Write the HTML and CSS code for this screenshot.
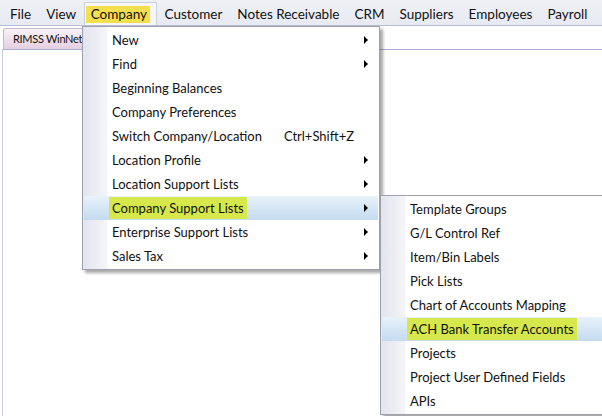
FILE: index.html
```html
<!DOCTYPE html>
<html lang="en">
<head>
    <meta charset="UTF-8">
    <meta name="viewport" content="width=device-width, initial-scale=1.0">
    <title>RIMSS WinNet</title>
    <link rel="stylesheet" href="styles.css">
</head>
<body>

<div class="menubar">
    <span class="bar-item">File</span>
    <span class="bar-item">View</span>
    <span class="bar-item open"><span class="hl">Company</span></span>
    <span class="bar-item">Customer</span>
    <span class="bar-item">Notes Receivable</span>
    <span class="bar-item">CRM</span>
    <span class="bar-item">Suppliers</span>
    <span class="bar-item">Employees</span>
    <span class="bar-item">Payroll</span>
</div>

<div class="workspace">
    <div class="tabs">
        <div class="tab">RIMSS WinNet</div>
    </div>
    <div class="panel"></div>
</div>

<!-- Company dropdown -->
<div class="menu menu-company">
    <div class="menu-item"><span class="label">New</span><span class="arrow"></span></div>
    <div class="menu-item"><span class="label">Find</span><span class="arrow"></span></div>
    <div class="menu-item"><span class="label">Beginning Balances</span><span class="cell"></span></div>
    <div class="menu-item"><span class="label">Company Preferences</span><span class="cell"></span></div>
    <div class="menu-item"><span class="label">Switch Company/Location</span><span class="shortcut">Ctrl+Shift+Z</span><span class="cell"></span></div>
    <div class="menu-item"><span class="label">Location Profile</span><span class="arrow"></span></div>
    <div class="menu-item"><span class="label">Location Support Lists</span><span class="arrow"></span></div>
    <div class="menu-item active"><span class="label"><span class="hl">Company Support Lists</span></span><span class="arrow"></span></div>
    <div class="menu-item"><span class="label">Enterprise Support Lists</span><span class="arrow"></span></div>
    <div class="menu-item"><span class="label">Sales Tax</span><span class="arrow"></span></div>
</div>

<!-- Company Support Lists submenu -->
<div class="menu menu-sub">
    <div class="menu-item"><span class="label">Template Groups</span></div>
    <div class="menu-item"><span class="label">G/L Control Ref</span></div>
    <div class="menu-item"><span class="label">Item/Bin Labels</span></div>
    <div class="menu-item"><span class="label">Pick Lists</span></div>
    <div class="menu-item"><span class="label">Chart of Accounts Mapping</span></div>
    <div class="menu-item active"><span class="label"><span class="hl">ACH Bank Transfer Accounts</span></span></div>
    <div class="menu-item"><span class="label">Projects</span></div>
    <div class="menu-item"><span class="label">Project User Defined Fields</span></div>
    <div class="menu-item"><span class="label">APIs</span></div>
</div>

</body>
</html>
```

FILE: styles.css
```css
body {
    margin: 0;
    width: 602px;
    height: 416px;
    overflow: hidden;
    position: relative;
    background: #fff;
    font-family: Lato, "Open Sans", sans-serif;
    color: #111;
}
.menubar {
    height: 26px;
    box-sizing: border-box;
    padding: 2px 0 0 2px;
    display: flex;
    background: linear-gradient(#eff1f6, #e7eaf2);
    border-bottom: 1px solid #b8bdd6;
    font-size: 13.5px;
}
.bar-item {
    display: flex;
    align-items: center;
    padding: 0 7.5px;
    white-space: nowrap;
}
.bar-item:first-child {
    padding-left: 8px;
}
.bar-item.open {
    background: #f7f7fa;
    border: 1px solid #cdd0da;
    border-bottom: none;
    padding: 0 6px 0 1px;
}
.bar-item .hl {
    background: #f6df4c;
    padding: 1px 3px 1px 5px;
    line-height: 15px;
}
.tabs {
    height: 23px;
    display: flex;
    align-items: flex-end;
    padding-left: 3px;
}
.tab {
    height: 20px;
    line-height: 20px;
    padding: 0 6px 0 9px;
    font-size: 11px;
    letter-spacing: -0.3px;
    border: 1px solid #c6b7ca;
    border-bottom: none;
    border-radius: 3px 3px 0 0;
    background: linear-gradient(#f9f3f8, #e5cfe1);
}
.panel {
    margin-left: 2px;
    height: 380px;
    border-top: 1px solid #aab0d3;
    border-left: 1px solid #c9cbda;
}
.menu {
    position: absolute;
    box-sizing: border-box;
    padding: 1px;
    border: 1px solid #9ea1ad;
    background: linear-gradient(90deg, #e2e4ee 0, #f5f5f9 24px, #fff 25px);
    box-shadow: 3px 3px 3px rgba(0, 0, 0, 0.35);
    font-size: 13px;
}
.menu-company {
    left: 82px;
    top: 26px;
    width: 298px;
}
.menu-sub {
    left: 380px;
    top: 195px;
    width: 260px;
}
.menu-item {
    height: 24px;
    display: flex;
    align-items: center;
    padding-left: 28px;
    white-space: nowrap;
}
.menu-item.active {
    background: linear-gradient(#e8f2fb, #c4dbef);
}
.menu-item .label {
    flex: 1;
}
.menu-item .hl {
    display: inline-block;
    background: #d6e84b;
    line-height: 22px;
    padding: 0 3px;
    margin-left: -3px;
}
.shortcut {
    flex: none;
}
.cell, .arrow {
    flex: none;
    width: 24px;
    height: 24px;
    position: relative;
}
.arrow::before {
    content: "";
    position: absolute;
    left: 10px;
    top: 8px;
    border-left: 4px solid #000;
    border-top: 4px solid transparent;
    border-bottom: 4px solid transparent;
}
```
